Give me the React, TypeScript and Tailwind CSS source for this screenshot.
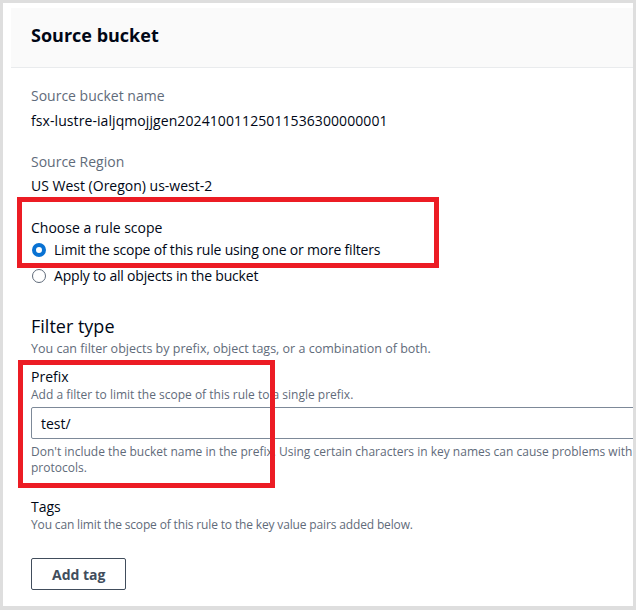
import React from 'react'

const font = { fontFamily: '"Open Sans", "Liberation Sans", sans-serif' }

function Radio({ checked, label }: { checked?: boolean; label: string }) {
  return (
    <label className="flex items-center h-[20px] text-[14px] leading-[20px] text-[#000716]">
      {checked ? (
        <span className="w-[14px] h-[14px] rounded-full border-[4px] border-[#0972d3] bg-white mr-[8px] ml-[1px]" />
      ) : (
        <span className="w-[14px] h-[14px] rounded-full border-[1.5px] border-[#5f6b7a] bg-white mr-[8px] ml-[1px]" />
      )}
      <span className="tracking-[-0.2px]">{label}</span>
    </label>
  )
}

export default function App() {
  return (
    <div style={font} className="relative w-[636px] h-[610px] bg-white border-[3px] border-[#dedede] border-b-[4px] overflow-hidden">
      <div className="ml-[8px] mt-[5px] w-[760px]">
        {/* Header */}
        <div className="h-[60px] bg-[#fafafa] border-b border-[#e9ebed] px-[20px] pt-[16px]">
          <h2 className="text-[18px] font-bold text-[#000716] leading-[22px]">Source bucket</h2>
        </div>

        {/* Body */}
        <div className="px-[20px] pt-[18px]">
          <div className="text-[14px] leading-[20px] text-[#5f6b7a]">Source bucket name</div>
          <div className="mt-[5px] text-[14px] leading-[20px] text-[#000716] tracking-[0.08px]">
            fsx-lustre-ialjqmojjgen20241001125011536300000001
          </div>

          <div className="mt-[21px] text-[14px] leading-[20px] text-[#5f6b7a]">Source Region</div>
          <div className="mt-[4px] text-[14px] leading-[20px] text-[#000716]">US West (Oregon) us-west-2</div>

          <div className="mt-[22px] text-[14px] leading-[20px] text-[#000716]">Choose a rule scope</div>
          <div className="mt-[2px] flex flex-col gap-[6px]">
            <Radio checked label="Limit the scope of this rule using one or more filters" />
            <Radio label="Apply to all objects in the bucket" />
          </div>

          <h3 className="mt-[29px] text-[18px] leading-[22px] text-[#000716]">Filter type</h3>
          <p className="mt-[4px] text-[12.5px] leading-[16px] text-[#5f6b7a]">
            You can filter objects by prefix, object tags, or a combination of both.
          </p>

          <div className="mt-[10px] text-[14px] leading-[20px] text-[#000716]">Prefix</div>
          <p className="text-[12px] leading-[16px] text-[#5f6b7a]">
            Add a filter to limit the scope of this rule to a single prefix.
          </p>
          <div className="mt-[4px] h-[32px] w-[720px] border border-[#7d8998] rounded-[2px] flex items-center px-[9px] text-[14px] text-[#000716]">
            test/
          </div>
          <p className="mt-[5px] w-[740px] text-[12px] leading-[16px] text-[#5f6b7a]">
            Don't include the bucket name in the prefix. Using certain characters in key names can cause problems with some applications and protocols.
          </p>

          <div className="mt-[21px] text-[14px] leading-[20px] text-[#000716]">Tags</div>
          <p className="text-[12px] leading-[16px] text-[#5f6b7a] tracking-[-0.15px]">
            You can limit the scope of this rule to the key value pairs added below.
          </p>

          <button className="mt-[25px] h-[32px] px-[20px] border border-[#414d5c] rounded-[2px] bg-white text-[14px] font-bold text-[#414d5c]">
            Add tag
          </button>
        </div>
      </div>

      {/* Annotation boxes */}
      <div className="absolute left-[14px] top-[194px] w-[422px] h-[71px] border-[5px] border-[#ec1c24]" />
      <div className="absolute left-[15px] top-[357px] w-[257px] h-[128px] border-[5px] border-[#ec1c24]" />
    </div>
  )
}
